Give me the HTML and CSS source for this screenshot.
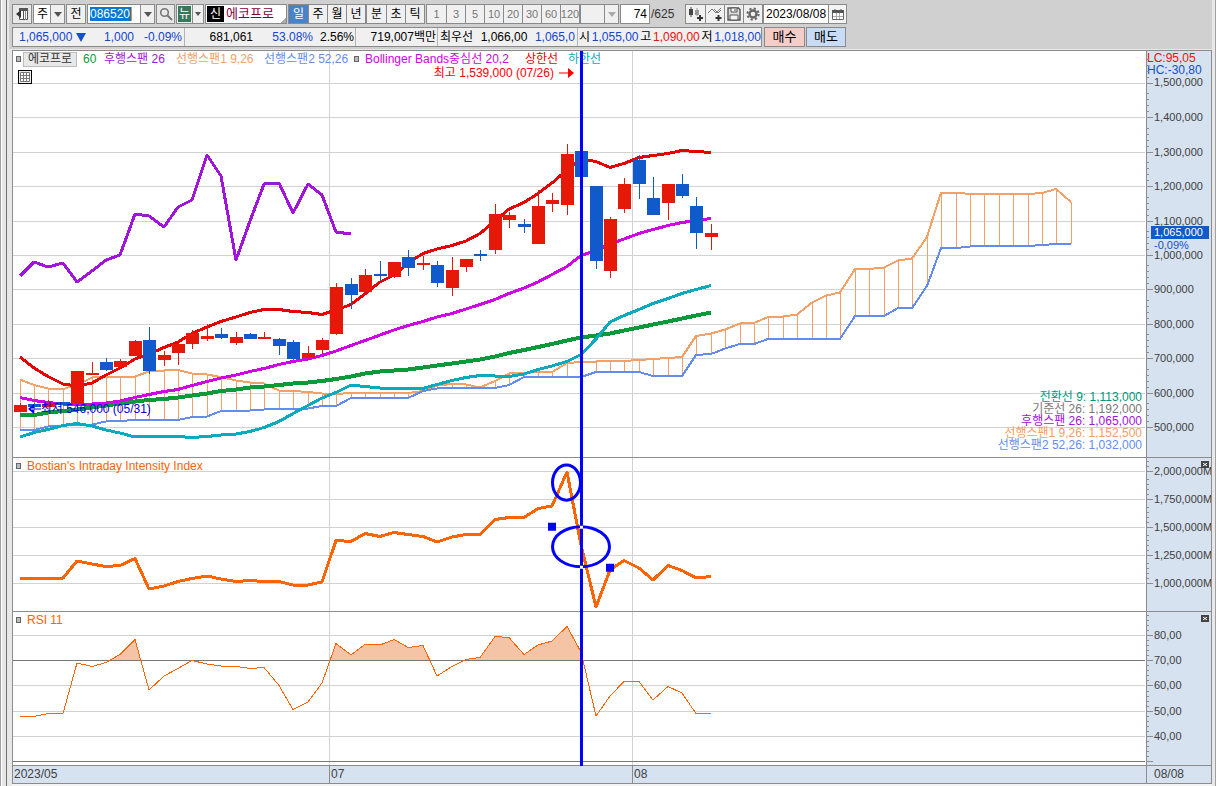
FILE: index.html
```html
<!DOCTYPE html>
<html lang="ko">
<head>
<meta charset="utf-8">
<title>에코프로 차트</title>
<link rel="stylesheet" href="styles.css">
</head>
<body>
<div class="window">
  <div class="gutter-left"></div>
  <main class="main">
    <header class="header">
      <div class="toolbar">
        <button class="btn icon-btn" aria-label="패널">
          <svg width="14" height="14" viewBox="0 0 14 14"><path d="M4.500 1.500h8v11h-8z" fill="#fff" stroke="#555"/><path d="M4 1h9v3H4z" fill="#555"/><path d="M10.500 4v9" stroke="#888"/><path d="M8 3h1v10H8z" fill="#555"/><path d="M6 3v8L1 7z" fill="#333"/></svg>
        </button>
        <div class="combo period">
          <select aria-label="종류"><option>주</option></select>
          <span class="arrow"><svg width="8" height="5" viewBox="0 0 8 5"><path d="M0 0h8L4 5z"/></svg></span>
        </div>
        <button class="btn prev">전</button>
        <div class="combo code">
          <input type="text" class="code-input" value="086520" aria-label="종목코드">
          <span class="arrow"><svg width="8" height="5" viewBox="0 0 8 5"><path d="M0 0h8L4 5z"/></svg></span>
        </div>
        <button class="btn icon-btn search" aria-label="검색">
          <svg width="14" height="14" viewBox="0 0 14 14"><circle cx="5.500" cy="5.500" r="3.800" fill="none" stroke="#777" stroke-width="1.600"/><path d="M8.500 8.500L13 13" stroke="#777" stroke-width="2"/></svg>
        </button>
        <div class="combo news">
          <button class="news-btn">뉴</button>
          <span class="arrow small"><svg width="6" height="4" viewBox="0 0 6 4"><path d="M0 0h6L3 4z"/></svg></span>
        </div>
        <div class="stock"><span class="stock-tag">신</span><span class="stock-name">에코프로</span></div>
        <div class="group">
          <button class="seg on">일</button><button class="seg">주</button><button class="seg">월</button><button class="seg">년</button>
        </div>
        <div class="group joined">
          <button class="seg">분</button><button class="seg">초</button><button class="seg">틱</button>
        </div>
        <div class="group numbers">
          <button class="seg">1</button><button class="seg">3</button><button class="seg">5</button><button class="seg">10</button><button class="seg">20</button><button class="seg">30</button><button class="seg">60</button><button class="seg">120</button>
        </div>
        <div class="combo minutes joined">
          <select aria-label="분 간격" disabled><option></option></select>
          <span class="arrow pale"><svg width="8" height="5" viewBox="0 0 8 5"><path d="M0 0h8L4 5z"/></svg></span>
        </div>
        <input type="text" class="count" value="74" aria-label="표시 개수">
        <span class="total">/625</span>
        <div class="group tools">
          <button class="seg" aria-label="캔들 추가"><svg width="16" height="14" viewBox="0 0 16 14"><path d="M1 2h4v6H1zM2.500 0h1v10h-1z" fill="#444"/><path d="M7 3h4v5H7zM8.500 1h1v8h-1z" fill="#999"/><path d="M12 8v6M9 11h6" stroke="#333" stroke-width="2"/></svg></button>
          <button class="seg" aria-label="지표 추가"><svg width="16" height="14" viewBox="0 0 16 14"><path d="M1 6l4-4 4 4 5-5M7 2l4 4 3-3" fill="none" stroke="#777"/><path d="M11.500 8v6M8.500 11h6" stroke="#333" stroke-width="2"/></svg></button>
          <button class="seg" aria-label="저장"><svg width="14" height="14" viewBox="0 0 14 14"><path d="M1 1h10.500L13 2.500V13H1z" fill="#ddd" stroke="#555" stroke-width="1.400"/><path d="M4 1h6v4H4zM3 8h8v5H3z" fill="#f4f4f4" stroke="#555"/><path d="M8 2v2" stroke="#555"/></svg></button>
          <button class="seg" aria-label="설정"><svg width="14" height="14" viewBox="0 0 14 14"><circle cx="7" cy="7" r="3.500" fill="none" stroke="#666" stroke-width="2.400"/><circle cx="7" cy="7" r="5.600" fill="none" stroke="#666" stroke-width="2" stroke-dasharray="2.200 2.200"/></svg></button>
        </div>
        <div class="combo date joined">
          <input type="text" value="2023/08/08" aria-label="날짜">
          <button class="cal" aria-label="달력"><svg width="12" height="11" viewBox="0 0 12 11"><path d="M.5 1.500h11v9H.5z" fill="#fff" stroke="#666"/><path d="M0 1h12v3H0z" fill="#555"/><path d="M3 0v2M9 0v2" stroke="#555"/><path d="M1 7.500h10M4.500 4v6M7.500 4v6" stroke="#aaa"/></svg></button>
        </div>
      </div>
      <div class="quote-row">
        <div class="quote">
          <div class="cell change down"><span class="q-last">1,065,000</span><svg class="tri" width="10" height="9" viewBox="0 0 10 9"><path d="M0 0h10L5 9z"/></svg><span class="q-diff">1,000</span><span class="q-rate">-0.09%</span></div>
          <div class="cell volume"><span class="q-vol">681,061</span><span class="q-pct down">53.08%</span><span class="q-turn">2.56%</span></div>
          <div class="cell amount">719,007백만</div>
          <div class="cell best"><span>최우선</span><span>1,066,00</span><span class="down">1,065,0</span></div>
          <div class="cell ohl"><span>시</span><span class="down">1,055,00</span><span>고</span><span class="up">1,090,00</span><span>저</span><span class="down">1,018,00</span></div>
        </div>
        <button class="order buy">매수</button>
        <button class="order sell">매도</button>
      </div>
    </header>

    <section class="chart">
      <div class="pane price-pane">
        <svg id="price" class="plot" viewBox="13 51 1133 406" preserveAspectRatio="none"></svg>
        <div class="legend">
          <i class="marker"></i><span class="name-box">에코프로</span><span class="green lg-ma">60</span><span class="purple lg-lag">후행스팬 26</span><span class="orange lg-a">선행스팬1 9,26</span><span class="blue lg-b">선행스팬2 52,26</span><i class="marker"></i><span class="magenta lg-bb">Bollinger Bands중심선 20,2</span><span class="red lg-up">상한선</span><span class="teal">하한선</span>
        </div>
        <button class="table-btn" aria-label="표 보기"><svg width="10" height="10" viewBox="0 0 10 10"><path d="M.5.5h9v9h-9zM.5 3.500h9M.5 6.500h9M3.500.5v9M6.500.5v9" fill="#fff" stroke="#777"/></svg></button>
        <div class="note high">최고 1,539,000 (07/26)<svg width="16" height="12" viewBox="0 0 16 12"><path d="M0 5.500h10v1H0zM9 1l6 5-6 5z"/></svg></div>
        <div class="note low"><svg width="13" height="12" viewBox="0 0 13 12"><path d="M3 5.500h10v1H3zM6 1L0 6l6 5z"/></svg>최저 546,000 (05/31)</div>
        <div class="values">
          <span class="deep">전환선 9: 1,113,000</span>
          <span class="grey">기준선 26: 1,192,000</span>
          <span class="purple">후행스팬 26: 1,065,000</span>
          <span class="orange">선행스팬1 9,26: 1,152,500</span>
          <span class="blue">선행스팬2 52,26: 1,032,000</span>
        </div>
      </div>
      <div class="axis" id="price-axis">
        <div class="limits"><span class="up">LC:95,05</span><span class="hc">HC:-30,80</span></div>
        <div class="now"><span class="tag">1,065,000</span><span class="rate">-0,09%</span></div>
      </div>

      <div class="pane intensity-pane">
        <svg id="intensity" class="plot" viewBox="13 458 1133 153" preserveAspectRatio="none"></svg>
        <div class="legend"><i class="marker"></i><span class="hot">Bostian's Intraday Intensity Index</span></div>
      </div>
      <div class="axis" id="intensity-axis"><button class="close" aria-label="닫기"><svg width="4" height="3" viewBox="0 0 4 3"><path d="M0 0l4 3M4 0L0 3" stroke="#fff"/></svg></button></div>

      <div class="pane rsi-pane">
        <svg id="rsi" class="plot" viewBox="13 612 1133 153" preserveAspectRatio="none"></svg>
        <div class="legend"><i class="marker"></i><span class="hot">RSI 11</span></div>
      </div>
      <div class="axis" id="rsi-axis"><button class="close" aria-label="닫기"><svg width="4" height="3" viewBox="0 0 4 3"><path d="M0 0l4 3M4 0L0 3" stroke="#fff"/></svg></button></div>

      <svg class="drawings" viewBox="13 51 1133 714" preserveAspectRatio="none">
        <g fill="none" stroke="#0000ff" stroke-width="3">
          <ellipse cx="566.500" cy="482" rx="14" ry="17.500"/>
          <ellipse cx="581" cy="546" rx="28.500" ry="20"/>
          <path d="M581.500 51V765" shape-rendering="crispEdges"/>
        </g>
        <path d="M548 522h8v8h-8zM606 563h8v8h-8z" fill="#0000ff"/>
        <path d="M580 525h3v3h-3zM580 565h3v3h-3z" fill="#fff"/>
      </svg>

      <div class="dates"><span>2023/05</span><span>07</span><span>08</span></div>
      <div class="date-end">08/08</div>
    </section>
    <div class="footer"></div>
  </main>
  <div class="gutter-right"></div>
</div>
<script src="chart.js"></script>
</body>
</html>
```
FILE: styles.css
```css
* { box-sizing: border-box; }
body {
  margin: 0;
  background: #e8e8e8;
  color: #000;
  font: 12px/14px "Liberation Sans", "Noto Sans CJK KR", sans-serif;
}
button, input, select { font: inherit; color: inherit; margin: 0; padding: 0; border-radius: 0; }
button { white-space: nowrap; }
input, select { min-width: 0; border: 0; background: none; outline: 0; appearance: none; }

.window { display: flex; min-height: 100vh; }
.gutter-left {
  flex: none; width: 9px;
  background: linear-gradient(90deg, #a0a0a0 1px, #fff 1px 2px, #e6e6e6 2px 6px, #6e6e6e 6px 7px, #e8e8e8 7px);
}
.gutter-right { flex: none; width: 4px; background: linear-gradient(90deg, #e8e8e8 3px, #a0a0a0 3px); }
.main { flex: 1; min-width: 0; display: flex; flex-direction: column; }

/* header */
.header {
  display: flex; flex-direction: column; gap: 3px;
  height: 50px; padding: 4px 0 0 3px;
  background: #d0d0d0; border-bottom: 1px solid #e8e8e8;
  overflow: hidden;
}
.toolbar, .quote-row { display: flex; height: 20px; flex: none; }
.toolbar { gap: 1px; }
.btn, .combo, .group, .stock, .count { flex: none; height: 20px; border: 1px solid #8a8a8a; background: #f0f0f0; }
.btn { width: 20px; text-align: center; }
.icon-btn { display: flex; align-items: center; justify-content: center; background: #e8e8e8; }
.search { width: 19px; }
.combo { display: flex; background: #fff; }
.combo select, .combo input { flex: 1; width: 0; }
.arrow {
  flex: none; width: 14px; display: flex; align-items: center; justify-content: center;
  border-left: 1px solid #8a8a8a; background: #f0f0f0; fill: #555;
}
.arrow.small { width: 11px; }
.arrow.pale { fill: #aaa; }
.period { width: 32px; }
.period select { padding-left: 3px; }
.code { width: 68px; justify-content: space-between; }
.combo .code-input {
  flex: none; width: 42px; height: 14px; margin: 2px;
  background: #0078d7; color: #fff; border-right: 1px solid #ff8c1a;
}
.news { width: 28px; background: #f0f0f0; }
.news-btn { flex: 1; margin: 1px; border: 0; background: #37785a; color: #fff; }
.stock { width: 82px; display: flex; align-items: center; background: linear-gradient(135deg, #fff 94%, #aaa 94%); }
.stock-tag { width: 17px; line-height: 16px; margin-left: 1px; background: #000; color: #fff; text-align: center; }
.stock-name { margin-left: 2px; font-size: 13px; color: #800040; }
.group { display: flex; }
.joined { margin-left: -1px; }
.seg {
  flex: none; width: 19px; height: 18px; border: 0; border-left: 1px solid #8a8a8a;
  background: #f0f0f0; text-align: center;
  display: flex; align-items: center; justify-content: center;
}
.seg:first-child { border-left: 0; }
.seg.on { background: #4a82c8; color: #fff; }
.numbers .seg { color: #777; font-size: 11px; }
.minutes { width: 39px; background: #f0f0f0; }
.count { width: 30px; background: #fff; border: 1px solid #8a8a8a; text-align: right; padding-right: 2px; }
.total { width: 33px; line-height: 20px; color: #333; }
.date { width: 84px; }
.date input { padding-left: 2px; }
.cal { flex: none; width: 18px; border: 0; border-left: 1px solid #8a8a8a; background: #f4f4f4; display: flex; align-items: center; justify-content: center; }

.quote { display: flex; width: 750px; border: 1px solid #8a8a8a; background: #f0f0f0; }
.cell { display: flex; align-items: center; overflow: hidden; white-space: nowrap; border-left: 1px solid #b4b4b4; }
.cell:first-child { border-left: 0; }
.change { width: 171px; padding-left: 6px; }
.tri { fill: #1450c8; margin-left: 3px; }
.q-last { width: 54px; }
.q-diff { width: 48px; text-align: right; }
.q-rate { width: 48px; text-align: right; }
.volume { width: 171px; justify-content: flex-end; padding-right: 1px; }
.q-pct { width: 60px; text-align: right; }
.q-turn { width: 41px; text-align: right; }
.amount { width: 82px; justify-content: flex-end; padding-right: 1px; }
.best { width: 140px; padding: 0 2px; justify-content: space-between; }
.ohl { flex: 1; justify-content: space-between; padding-left: 1px; }
.down { color: #1446c8; }
.up { color: #e6140a; }
.order { width: 41px; border: 1px solid #8a8a8a; font-size: 13px; }
.buy { background: #f5cdc8; margin-left: 2px; }
.sell { background: #c8dcf5; width: 40px; margin-left: 1px; }

/* chart */
.chart {
  flex: 1; min-height: 480px; margin-left: 3px;
  display: grid;
  grid-template-columns: minmax(0, 1fr) 65px;
  grid-template-rows: minmax(0, 407fr) minmax(0, 154fr) minmax(0, 154fr) 17px;
  border: 1px solid #8c8c8c;
  background: #fff;
}
.pane, .axis { position: relative; overflow: hidden; border-bottom: 1px solid #8c8c8c; }
.pane { grid-column: 1; }
.axis { grid-column: 2; border-left: 1px solid #8c8c8c; background: #d6e2f0; color: #404040; }
.price-pane, #price-axis { grid-row: 1; }
.intensity-pane, #intensity-axis { grid-row: 2; }
.rsi-pane, #rsi-axis { grid-row: 3; }
.plot { position: absolute; left: 0; top: 0; width: 100%; height: 100%; }
.drawings { grid-column: 1; grid-row: 1 / 4; width: 100%; height: 100%; position: relative; pointer-events: none; }

.legend { position: absolute; left: 3px; top: 1px; display: flex; align-items: center; height: 14px; white-space: nowrap; }
.marker { flex: none; width: 5px; height: 6px; border: 1px solid #666; background: #bbb; }
.legend .hot { margin-left: 6px; }
.name-box { width: 54px; margin: 0 6px 0 2px; line-height: 13px; text-align: center; border: 1px solid #bbb; background: #e8e8e8; color: #333; }
.lg-ma { width: 21px; }
.lg-lag { width: 72px; }
.lg-a { width: 88px; }
.lg-b { width: 90px; }
.lg-bb { width: 160px; margin-left: 6px; }
.lg-up { width: 43px; }
.table-btn { position: absolute; left: 5px; top: 19px; width: 14px; height: 14px; border: 1px solid #000; background: #eee; display: flex; align-items: center; justify-content: center; }
.note { position: absolute; display: flex; align-items: center; white-space: nowrap; }
.high { right: 50.400%; top: 15px; gap: 5px; color: #f00; fill: #f00; }
.low { left: 1.300%; top: 86.400%; color: #0000d8; fill: #00f; }
.values { position: absolute; right: 4px; bottom: 6px; display: flex; flex-direction: column; text-align: right; line-height: 12px; }

.green { color: #0a9a3a; }
.purple { color: #a014dc; }
.orange { color: #f5a064; }
.blue { color: #648cf0; }
.magenta { color: #d200e6; }
.red { color: #e60000; }
.teal { color: #0aaabe; }
.deep { color: #009678; }
.grey { color: #787878; }
.hot { color: #ff6400; }

.tick-label { position: absolute; left: 7px; height: 14px; margin-top: -8px; font-size: 11px; white-space: nowrap; }
.limits { position: absolute; left: 0; top: 1px; display: flex; flex-direction: column; line-height: 12px; white-space: nowrap; }
.hc { color: #1450c8; }
.now { position: absolute; z-index: 1; left: 4px; top: 43.100%; width: 58px; display: flex; flex-direction: column; font-size: 11px; line-height: 13px; }
.tag { padding-left: 3px; background: #105acc; color: #fff; }
.rate { padding-left: 3px; color: #1450c8; line-height: 12px; }
.close { position: absolute; z-index: 1; right: 2px; top: 3px; width: 8px; height: 7px; border: 0; background: #444; display: flex; align-items: center; justify-content: center; }

.dates, .date-end { background: #d6e2f0; color: #404040; line-height: 16px; }
.dates { grid-column: 1; grid-row: 4; display: grid; grid-template-columns: 316fr 303fr 514fr; }
.dates span { padding-left: 1px; border-left: 1px solid #8c8c8c; }
.dates span:first-child { border-left: 0; }
.date-end { grid-column: 2; grid-row: 4; border-left: 1px solid #8c8c8c; padding-left: 7px; }
.footer { height: 2px; margin-left: 3px; background: #f4f4f4; }
```
FILE: chart.js
```js
const NS = 'http://www.w3.org/2000/svg';
const STEP = 14.4;
const X = i => Math.floor(20 + STEP * i);

function add(svg, name, attrs) {
  const el = document.createElementNS(NS, name);
  for (const k in attrs) el.setAttribute(k, attrs[k]);
  svg.appendChild(el);
  return el;
}
function points(ys) { return ys.map((y, i) => X(i) + ',' + y).join(' '); }
function line(svg, ys, color, width) {
  add(svg, 'polyline', { points: points(ys), fill: 'none', stroke: color, 'stroke-width': width, 'stroke-linejoin': 'round', 'shape-rendering': 'crispEdges' });
}
function grid(svg, ys, top, bottom) {
  for (const x of [329, 632]) add(svg, 'rect', { x, y: top, width: 1, height: bottom - top, fill: '#d2d2d2' });
  for (const y of ys) add(svg, 'rect', { x: 13, y, width: 1132, height: 1, fill: '#d2d2d2' });
}
function axis(id, top, height, labels, minor) {
  const box = document.getElementById(id);
  const svg = add(box, 'svg', { class: 'plot', viewBox: `0 ${top} 64 ${height}`, preserveAspectRatio: 'none' });
  for (const [y, text] of labels) {
    add(svg, 'rect', { x: 0, y, width: 6, height: 1, fill: '#8c8c8c' });
    for (let k = 1; k < 5; k++) add(svg, 'rect', { x: 0, y: y - k * minor, width: 2, height: 1, fill: '#8c8c8c' });
    if (!text) continue;
    const s = document.createElement('span');
    s.className = 'tick-label';
    s.textContent = text;
    s.style.top = (y - top + 0.5) / height * 100 + '%';
    box.appendChild(s);
  }
}

/* price pane */
const price = document.getElementById('price');
const priceTicks = [83, 117, 152, 186, 221, 255, 289, 324, 358, 393, 427];
grid(price, priceTicks, 51, 457);

const spanA = [379.5,385,388.5,389,385,377.5,376.5,377,376.5,371.5,370.5,370,373.5,374.5,377,380.5,382.5,383.5,390.5,391,392,393.5,394,393,393,393,393,393,391,385.5,384,384.5,387.5,381,373.5,373,372,372,363,362,361.5,361,361,360,359,358,357,336,333.5,329.5,323.5,323,317,316.5,314.5,302.5,295.5,292.5,269,269,267.5,260.5,258.5,237,192.5,192.5,194,194,194,194,194,193,189,202];
const spanB = [430,430,426.5,425.5,425,424.5,421.5,421,420,420,420,420,417,416.5,411,410.5,410.5,409.5,408.5,408.5,408.5,406,406,398,398,398,398,398,391,388.5,388,388,388,388,385,377,377,377,377,377,372,372,372,372,376,376,376,355,354,348.5,344,344,339,339,339,339,339,339,316,316,316,308,308,286,248,248,246.5,246,246,246,246,245,244,244];
spanA.forEach((a, i) => {
  const b = spanB[i];
  add(price, 'rect', { x: X(i), y: Math.min(a, b), width: 1, height: Math.abs(a - b), fill: '#f5a064', 'shape-rendering': 'crispEdges' });
});
line(price, spanA, '#f5a064', 2);
line(price, spanB, '#648cf0', 2);
line(price, [415.5,415,412.5,411,409.5,407.5,405.5,403.5,401.5,400,399,397.5,395.5,393.5,391,389.5,387.5,386.5,385,383.5,382.5,381,379,376.5,373.5,371.5,370.5,369.5,367.5,365.5,363.5,361.5,359.5,356.5,353,350,347,344,340.5,337.5,335.5,333.5,330.5,327.5,324.5,321.5,318.5,315.5,312.5], '#0a9a3a', 4);
line(price, [357,368,376.5,384,386,383,375,368,359,354,347.5,342,333.5,327,321.5,317,312.5,309.5,309.5,311.5,312.5,314.5,310,304.5,294,282,275,263,253.5,249,245.5,241,233.5,221,209,202.5,193.5,183,170,159,161.5,167.5,163.5,157.5,155.5,153.5,150.5,151.5,152.5], '#e60000', 3);
line(price, [397.5,400.5,402.5,404,404.5,404,403,401,397.5,394.5,391.5,389.5,385.5,381.5,378,375,371.5,368.5,364.5,361.5,359,355.5,351,345.5,340.5,335,330,325.5,321.5,317,313.5,309,304.5,299.5,293.5,288,282,274.5,266.5,255.5,250.5,244,239,233.5,229.5,225.5,222.5,220.5,218.5], '#d200e6', 3);
line(price, [437,432.5,429.5,425.5,423.5,426,430,433,437,436.5,436.5,436.5,437.5,436.5,435,434,431.5,427.5,421.5,413.5,405.5,398,392.5,385,386.5,388,388.5,388.5,388.5,384.5,380.5,377.5,375.5,376,376.5,374,369.5,366,361.5,354.5,339,322,315.5,309.5,303.5,298.5,293.5,289.5,285.5], '#0aaabe', 3);
line(price, [276,262,267,263,282,271,260,255,214,216,227,207,200,155,176,260,221,184,183,213,184,195,232,234], '#a014dc', 3);

/* [rising, body top, body bottom, high, low] */
const R = 1, B = 0;
const candles = [
  [R,405,412,403,412],[B,404,407,403,408],[R,404,407,400,407],[B,402,405,402,405],[R,371,404,371,404],
  [R,373,375,362,375],[B,362,370,358,371],[R,361,367,359,369],[R,341,356,340,356],[B,340,371,327,374],
  [R,355,360,351,366],[R,344,353,343,365],[R,333,344,330,349],[R,336,339,324,341],[B,334,338,328,339],
  [R,337,343,332,345],[B,334,339,333,339],[R,337,339,332,339],[B,339,346,338,355],[B,342,359,340,360],
  [R,353,358,346,360],[R,340,350,338,354],[R,287,334,283,335],[B,284,295,278,309],[R,275,292,269,292],
  [B,274,276,261,281],[R,262,277,262,278],[B,257,268,250,276],[R,263,265,256,270],[B,265,283,261,287],
  [R,270,288,257,296],[R,259,267,259,272],[B,254,256,250,261],[R,214,250,204,254],[R,215,220,212,228],
  [B,224,227,219,233],[R,206,244,190,244],[R,200,204,193,212],[R,154,205,144,215],[B,151,177,151,177],
  [B,186,261,186,269],[R,219,271,217,278],[R,184,209,178,213],[B,160,184,155,199],[B,198,215,177,215],
  [R,184,203,184,220],[B,184,196,174,198],[B,206,233,197,249],[R,233,237,224,250]
];
candles.forEach(([up, t, b, h, l], i) => {
  const fill = up ? '#e61909' : '#105acc';
  add(price, 'rect', { x: X(i), y: h, width: 1, height: l - h, fill });
  add(price, 'rect', { x: X(i) - 6, y: t, width: 13, height: b - t, fill });
});
axis('price-axis', 51, 406, priceTicks.map((y, i) => [y, (15 - i) >= 10 ? '1,' + (5 - i) + '00,000' : (15 - i) + '00,000']), 6);

/* intensity pane */
const intensity = document.getElementById('intensity');
grid(intensity, [471, 499, 527, 555, 583], 458, 611);
line(intensity, [578,578,578,578,561,564,566.5,565.5,558.5,589,586,581.5,578.5,576,579,581.5,580.5,581.5,581.5,585,585,582,540.5,541.5,533.5,536.5,532.5,534.5,536.5,542,537,534.5,534.5,519.5,517.5,517.5,508.5,506,472,545,607,570,560.5,568,580,565.5,570.5,578,576.5], '#ff6400', 3);
axis('intensity-axis', 458, 153, [[471, '2,000,000M'], [499, '1,750,000M'], [527, '1,500,000M'], [555, '1,250,000M'], [583, '1,000,000M']], 5);

/* RSI pane */
const rsi = document.getElementById('rsi');
const rsiY = [716.5,716.5,713.5,713.5,663,666.5,662.5,654.5,639.5,690,676,668.5,660.5,664,666,666.5,668.5,667.5,685.5,709.5,702,683,643.5,655,644.5,645,639.5,647.5,645.5,676,666.5,659.5,657.5,636.5,637.5,654.5,645,641,626.5,652,716,696,681.5,681.5,700,686.5,693,713.5,713.5];
grid(rsi, [635, 685, 711, 736], 612, 765);
add(add(rsi, 'clipPath', { id: 'overbought' }), 'rect', { x: 13, y: 612, width: 569, height: 48 });
add(rsi, 'polygon', { points: `${X(0)},760 ${points(rsiY)} ${X(48)},760`, fill: '#f5c3a5', 'clip-path': 'url(#overbought)' });
for (const y of [660, 761]) add(rsi, 'rect', { x: 13, y, width: 1132, height: 1, fill: '#787878' });
line(rsi, rsiY, '#ff6400', 1);
axis('rsi-axis', 612, 153, [[635, '80,00'], [660, '70,00'], [685, '60,00'], [711, '50,00'], [736, '40,00'], [761, '']], 5);
```
